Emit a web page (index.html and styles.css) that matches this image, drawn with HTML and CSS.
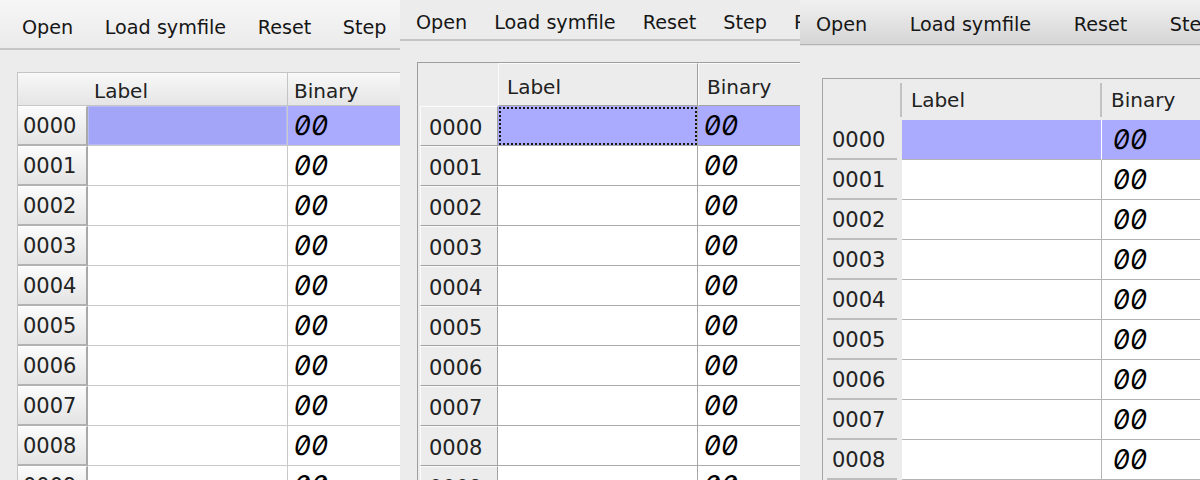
FILE: index.html
```html
<!DOCTYPE html>
<html>
<head>
<meta charset="utf-8">
<title>Memory view</title>
<link rel="stylesheet" href="styles.css">
</head>
<body>
<div class="screens">
  <section class="win win-a">
    <nav class="toolbar"><span>Open</span><span>Load symfile</span><span>Reset</span><span>Step</span></nav>
    <div class="stage">
      <div class="table">
        <div class="corner"></div><div class="colhead lbl">Label</div><div class="colhead">Binary</div>
        <div class="rowhead">0000</div><div class="cell label sel"></div><div class="cell bin sel"><span>00</span></div>
        <div class="rowhead">0001</div><div class="cell label"></div><div class="cell bin"><span>00</span></div>
        <div class="rowhead">0002</div><div class="cell label"></div><div class="cell bin"><span>00</span></div>
        <div class="rowhead">0003</div><div class="cell label"></div><div class="cell bin"><span>00</span></div>
        <div class="rowhead">0004</div><div class="cell label"></div><div class="cell bin"><span>00</span></div>
        <div class="rowhead">0005</div><div class="cell label"></div><div class="cell bin"><span>00</span></div>
        <div class="rowhead">0006</div><div class="cell label"></div><div class="cell bin"><span>00</span></div>
        <div class="rowhead">0007</div><div class="cell label"></div><div class="cell bin"><span>00</span></div>
        <div class="rowhead">0008</div><div class="cell label"></div><div class="cell bin"><span>00</span></div>
        <div class="rowhead">0009</div><div class="cell label"></div><div class="cell bin"><span>00</span></div>
      </div>
    </div>
  </section>
  <section class="win win-b">
    <nav class="toolbar"><span>Open</span><span>Load symfile</span><span>Reset</span><span>Step</span><span>Run</span></nav>
    <div class="stage">
      <div class="table">
        <div class="corner"></div><div class="colhead lbl">Label</div><div class="colhead">Binary</div>
        <div class="rowhead">0000</div><div class="cell label sel"></div><div class="cell bin sel"><span>00</span></div>
        <div class="rowhead">0001</div><div class="cell label"></div><div class="cell bin"><span>00</span></div>
        <div class="rowhead">0002</div><div class="cell label"></div><div class="cell bin"><span>00</span></div>
        <div class="rowhead">0003</div><div class="cell label"></div><div class="cell bin"><span>00</span></div>
        <div class="rowhead">0004</div><div class="cell label"></div><div class="cell bin"><span>00</span></div>
        <div class="rowhead">0005</div><div class="cell label"></div><div class="cell bin"><span>00</span></div>
        <div class="rowhead">0006</div><div class="cell label"></div><div class="cell bin"><span>00</span></div>
        <div class="rowhead">0007</div><div class="cell label"></div><div class="cell bin"><span>00</span></div>
        <div class="rowhead">0008</div><div class="cell label"></div><div class="cell bin"><span>00</span></div>
        <div class="rowhead">0009</div><div class="cell label"></div><div class="cell bin"><span>00</span></div>
      </div>
    </div>
  </section>
  <section class="win win-c">
    <nav class="toolbar"><span>Open</span><span>Load symfile</span><span>Reset</span><span>Step</span></nav>
    <div class="stage">
      <div class="table">
        <div class="corner"></div><div class="colhead lbl">Label</div><div class="colhead">Binary</div>
        <div class="rowhead">0000</div><div class="cell label sel"></div><div class="cell bin sel"><span>00</span></div>
        <div class="rowhead">0001</div><div class="cell label"></div><div class="cell bin"><span>00</span></div>
        <div class="rowhead">0002</div><div class="cell label"></div><div class="cell bin"><span>00</span></div>
        <div class="rowhead">0003</div><div class="cell label"></div><div class="cell bin"><span>00</span></div>
        <div class="rowhead">0004</div><div class="cell label"></div><div class="cell bin"><span>00</span></div>
        <div class="rowhead">0005</div><div class="cell label"></div><div class="cell bin"><span>00</span></div>
        <div class="rowhead">0006</div><div class="cell label"></div><div class="cell bin"><span>00</span></div>
        <div class="rowhead">0007</div><div class="cell label"></div><div class="cell bin"><span>00</span></div>
        <div class="rowhead">0008</div><div class="cell label"></div><div class="cell bin"><span>00</span></div>
        <div class="rowhead">0009</div><div class="cell label"></div><div class="cell bin"><span>00</span></div>
      </div>
    </div>
  </section>
</div>
</body>
</html>
```
FILE: styles.css
```css
* { box-sizing: border-box; margin: 0; padding: 0; }
html, body { width: 1200px; height: 480px; overflow: hidden; background: #ececec; }
body { font-family: "DejaVu Sans", "Liberation Sans", sans-serif; color: #1c1c1c; }

.screens { display: flex; width: 1200px; height: 480px; }
.win { width: 400px; height: 480px; flex: none; overflow: hidden; background: #ececec; display: flex; flex-direction: column; }

.toolbar { flex: none; display: flex; align-items: center; white-space: nowrap; font-size: 19.2px; color: #161616; }
.toolbar span { flex: none; }
.stage { flex: 1; overflow: hidden; }

.table { display: grid; width: max-content; }
.corner, .colhead, .rowhead, .cell { display: flex; align-items: center; }
.colhead { font-size: 20px; color: #222; }
.rowhead { font-size: 21px; color: #222; }
.cell { background: #fff; }
.bin { font-family: Inter, "DejaVu Sans Mono", monospace; font-feature-settings: "zero" 1, "tnum" 1; font-size: 27px; font-weight: 400; color: #000; }
.bin span { display: inline-block; transform: skewX(-10deg); letter-spacing: -0.3px; }

/* ---------- window A ---------- */
.win-a .toolbar { height: 50px; padding: 7px 0 0 22px; gap: 31.5px; background: linear-gradient(#f6f6f6, #ebebeb); border-bottom: 2px solid #c6c6c6; }
.win-a .stage { padding: 22px 0 0 17px; }
.win-a .table { grid-template-columns: 70px 200px 200px; grid-template-rows: 33px repeat(10, 40px); border-top: 1px solid #c4c4c4; border-left: 1px solid #c4c4c4; }
.win-a .corner,
.win-a .colhead { background: linear-gradient(#f8f8f8, #e5e5e5); border-bottom: 1px solid #c6c6c6; padding: 3px 0 0 6px; }
.win-a .colhead.lbl { border-right: 1px solid #c4c4c4; }
.win-a .rowhead { background: linear-gradient(#fbfbfb, #e3e3e3); border-top: 1px solid #fff; border-right: 2px solid #a9a9a9; border-bottom: 2px solid #b2b2b2; padding-left: 5px; }
.win-a .cell { border-bottom: 1px solid #c9c9c9; }
.win-a .cell.label { border-right: 1px solid #c9c9c9; }
.win-a .cell.bin { padding-left: 6px; }
.win-a .cell.label.sel { background: #a3a6f8; box-shadow: inset 0 0 0 1px #b5baf7; }
.win-a .cell.bin.sel { background: #aaaaff; }

/* ---------- window B ---------- */
.win-b .toolbar { height: 41px; padding: 6px 0 0 16px; gap: 27px; background: #ececec; border-bottom: 2px solid #c4c4c4; }
.win-b .stage { padding: 21px 0 0 17px; }
.win-b .table { grid-template-columns: 80px 200px 200px; grid-template-rows: 43px repeat(10, 40px); border-top: 1px solid #9e9e9e; border-left: 1px solid #9e9e9e; }
.win-b .colhead { background: #ececec; border-top: 1px solid #fafafa; border-left: 1px solid #fafafa; border-bottom: 1px solid #a4a4a4; padding: 4px 0 0 8px; }
.win-b .colhead.lbl { border-right: 1px solid #a0a0a0; }
.win-b .rowhead { margin-left: 2px; background: #ececec; border-top: 1px solid #fbfbfb; border-left: 1px solid #fbfbfb; border-right: 1px solid #a2a2a2; border-bottom: 1px solid #a2a2a2; padding: 3px 0 0 8px; }
.win-b .cell { border-bottom: 1px solid #aaaaaa; }
.win-b .cell.label { border-right: 1px solid #a6a6a6; }
.win-b .cell.bin { padding-left: 6px; }
.win-b .cell.sel { background: #aaaaff; }
.win-b .cell.label.sel { outline: 2px dotted #161616; outline-offset: -3px; }

/* ---------- window C ---------- */
.win-c .toolbar { height: 45px; padding: 4px 0 0 16px; gap: 42.5px; background: linear-gradient(#f1f1f1, #d5d5d5); border-bottom: 1px solid #b2b2b2; box-shadow: 0 1px 0 #dedede; }
.win-c .stage { padding: 33px 0 0 22px; }
.win-c .table { grid-template-columns: 79px 200px 200px; grid-template-rows: 41px repeat(10, 40px); border-top: 1px solid #a4a4a4; border-left: 1px solid #a4a4a4; }
.win-c .corner,
.win-c .colhead.lbl { background: linear-gradient(#c2c2c2, #c2c2c2) right center / 2px 34px no-repeat; }
.win-c .colhead { padding: 0 0 0 9px; }
.win-c .rowhead { background: linear-gradient(#bdbdbd, #bdbdbd) 4px 100% / 70px 2px no-repeat; padding-left: 9px; }
.win-c .cell { border-bottom: 1px solid #b4b4b4; }
.win-c .cell.label { border-right: 1px solid #b4b4b4; }
.win-c .cell.bin { padding-left: 11px; }
.win-c .cell.sel { background: #aaaaff; }
.win-c .cell.label.sel { border-right-color: #fff; }
```
